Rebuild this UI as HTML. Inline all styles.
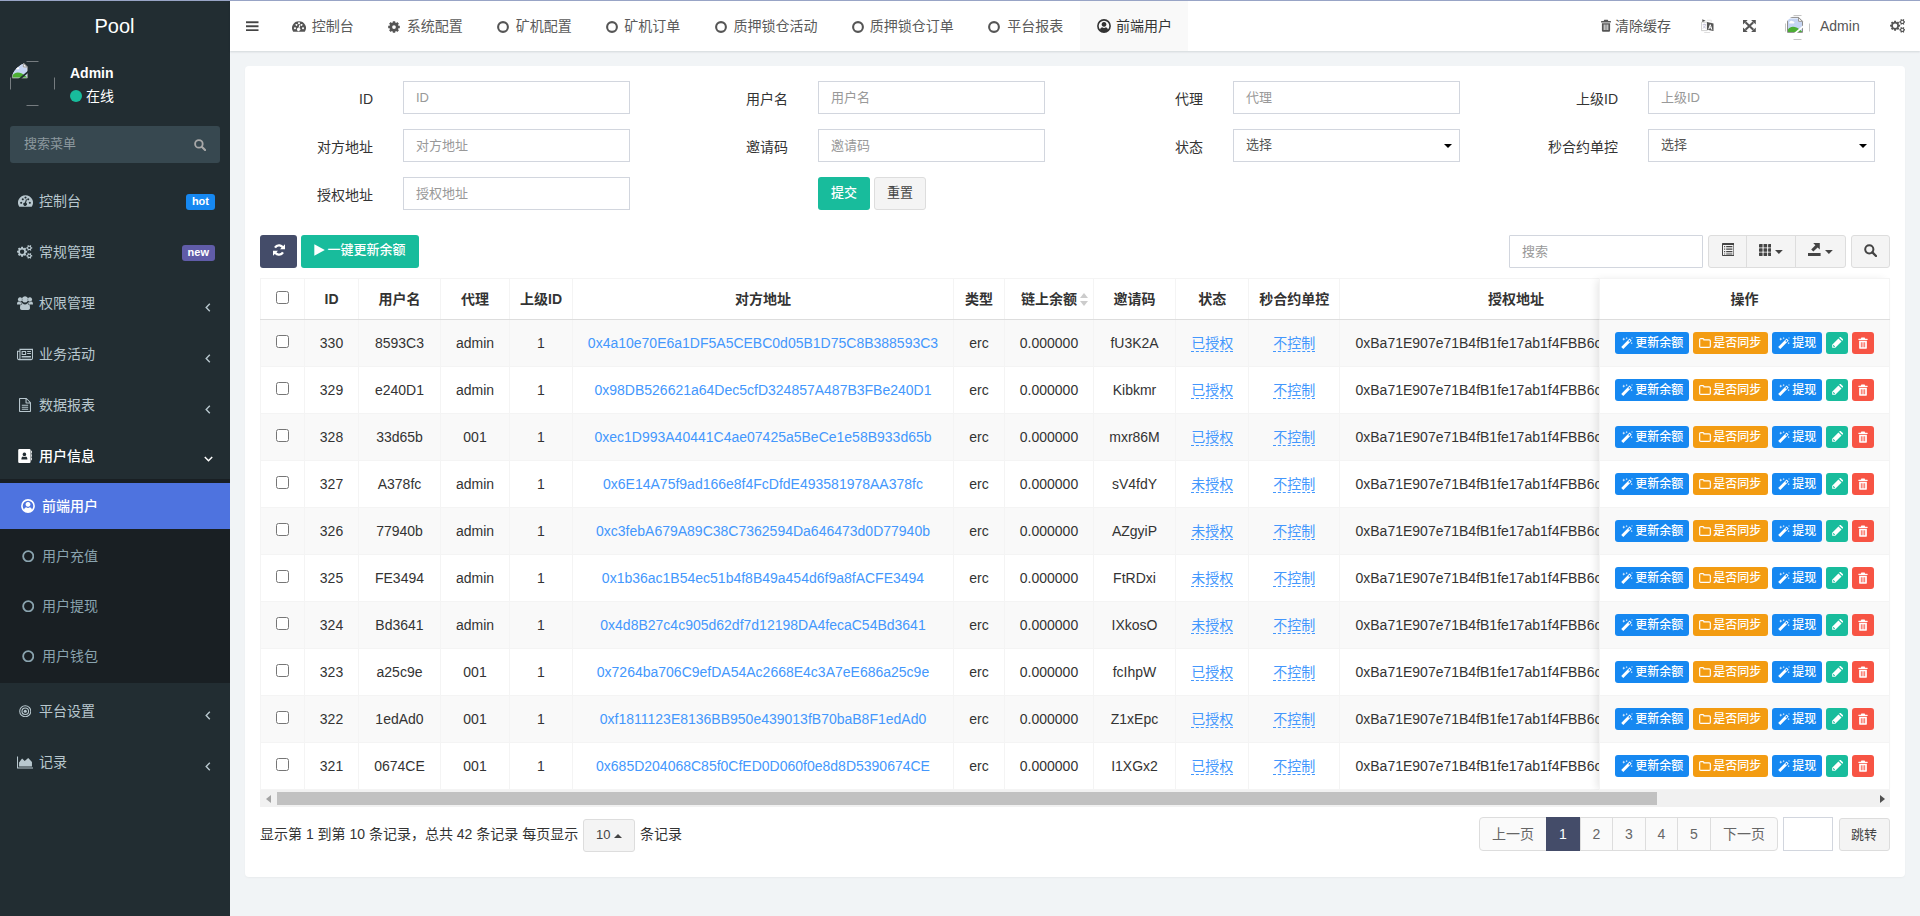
<!DOCTYPE html>
<html lang="zh-CN">
<head>
<meta charset="utf-8">
<title>Pool</title>
<style>
*{box-sizing:border-box}
html,body{margin:0;padding:0}
body{width:1920px;height:916px;overflow:hidden;position:relative;font-family:"Liberation Sans","Noto Sans CJK SC",sans-serif;font-size:14px;line-height:20px;color:#333;background:#f1f4f6}
a{text-decoration:none;color:inherit}
ul{list-style:none;margin:0;padding:0}
i{font-style:normal}
.ic{display:inline-block;vertical-align:middle}
#topline{position:absolute;left:0;top:0;width:1920px;height:1px;background:#98a4c6;z-index:50}
/* sidebar */
#side{position:absolute;left:0;top:0;width:230px;height:916px;background:#222d32;color:#b8c7ce}
#logo{height:50px;line-height:52px;text-align:center;padding-right:1px;color:#fff;font-size:20px}
#upanel{position:absolute;left:0;top:50px;width:230px;height:65px}
#upanel .av{position:absolute;left:10px;top:11px;line-height:0}
#upanel .nm{position:absolute;left:70px;top:13px;color:#fff;font-weight:bold;font-size:14px;line-height:20px}
#upanel .st{position:absolute;left:70px;top:36px;color:#fff;font-size:14px;line-height:20px}
#upanel .dot{display:inline-block;width:12px;height:12px;border-radius:50%;background:#18bc9c;vertical-align:-1px;margin-right:4px}
#sform{position:absolute;left:10px;top:126px;width:210px;height:37px;background:#374850;border-radius:3px;color:#8d999f;font-size:13px;line-height:36px;padding-left:14px}
#sform svg{position:absolute;right:14px;top:12.5px;color:#a8a8a8}
#menu{position:absolute;left:0;top:178px;width:230px}
#menu>li{margin-bottom:5px;position:relative}
#menu>li>a{display:block;height:46px;line-height:46px;color:#b8c7ce;font-size:14px;position:relative}
#menu .mi{position:absolute;left:17px;top:0;height:46px;display:flex;align-items:center;width:16px;justify-content:center}
#menu .tx{position:absolute;left:39px;top:0}
#menu>li.act>a{color:#fff;font-weight:500}
#menu .arr{position:absolute;left:205px;top:0;height:46px;display:flex;align-items:center;padding-top:8px}
#menu .arr.dn{left:204px;padding-top:6px}
.badge{position:absolute;right:15px;top:16px;height:16px;line-height:14.5px;border-radius:3px;color:#fff;font-weight:bold;font-size:11px;padding:0 6px}
.sub{background:#191f23;padding:4px 0;display:flow-root}
.sub li:last-child{margin-bottom:0}
.sub li{height:46px;margin-bottom:4px;position:relative;color:#8aa4af;line-height:46px}
#menu .sub .mi{left:21px;width:14px}
#menu .sub .tx{left:42px}
.sub li.on{background:#4e73df;color:#fff;font-weight:500}
/* header */
#hdr{position:absolute;left:230px;top:0;width:1690px;height:51px;background:#fff;box-shadow:0 1px 2px rgba(0,21,41,.13);z-index:10;color:#555}
#hdr .bars{position:absolute;left:16.3px;top:20.7px;color:#444;line-height:0}
#hdr .bars svg{display:block}
#tabs{position:absolute;left:0;top:0;height:50px}
#tabs .tab{position:absolute;top:0;height:51px;line-height:50px;color:#5b5b5b;white-space:nowrap}
#tabs .tab .ti{position:absolute;left:17px;top:0;height:53px;display:flex;align-items:center;color:#555}
#tabs .tab .tt{position:absolute;top:1px}
#tabs .tab.on{background:#f9f9f9;color:#333}
#tabs .tab.on .ti{color:#333}
#hdr .r{position:absolute;top:0;height:50px;line-height:50px;color:#555;white-space:nowrap}
/* content */
#panel{position:absolute;left:245px;top:66px;width:1660px;height:811px;background:#fff;border-radius:4px;box-shadow:0 1px 2px rgba(0,0,0,.04)}
.lbl{margin-top:1px;position:absolute;width:128px;text-align:right;padding-right:15px;font-size:14px;line-height:20px;color:#333}
.inp{border-radius:0;position:absolute;width:227px;height:33px;border:1px solid #d2d6de;background:#fff;font-size:13px;line-height:31px;padding-left:12px;color:#999}
.inp.sel{color:#555;line-height:29px}
.inp.sel:after{content:"";position:absolute;right:7px;top:14px;border:4px solid transparent;border-top:4.5px solid #000;border-bottom:0}
.btn{position:absolute;height:33px;line-height:30px;border:1px solid transparent;border-radius:3px;font-size:13px;text-align:center;white-space:nowrap}
.btn-def{background:#f4f4f4;border-color:#ddd;color:#444}
.cen{display:flex;align-items:center;justify-content:center;height:100%;padding-bottom:3px}
.crt{margin-left:4px;display:inline-flex}
/* table */
#tw{position:absolute;left:15px;top:212px;width:1630px;height:513px;overflow:hidden}
table{border-collapse:collapse;table-layout:fixed;border-spacing:0}
#tb{width:1722.5px}
th,td{border:1px solid #f4f4f4;text-align:center;padding:0 8px;white-space:nowrap;overflow:hidden;font-size:14px}
th{height:41px;padding-bottom:1px;border-bottom:1px solid #ddd;font-weight:bold;color:#333;background:#fff}
td{height:47px}
tbody tr:nth-child(odd) td{background:#f9f9f9}
tbody tr:nth-child(even) td{background:#fff}
input[type=checkbox]{margin:0;width:13px;height:13px;vertical-align:middle;position:relative;top:-2.5px}
th input[type=checkbox]{top:-2.5px}
td.au{text-align:left;padding-left:15.5px}
.lk{color:#4397fd}
.ed{color:#4397fd;border-bottom:1px dashed #4397fd}
th{position:relative}
.sort{position:absolute;right:5.5px;top:14px;width:8px;height:13px}
.sort i{position:absolute;left:0;border:4px solid transparent}
.sort .u{top:0;border-bottom:5px solid #ccc;border-top:0}
.sort .d{top:8px;border-top:5px solid #ccc;border-bottom:0}
#fx{position:absolute;left:1354px;top:212px;width:291px;height:513px;overflow:hidden;box-shadow:-4px 0 8px -2px rgba(0,0,0,.1);background:#fff}
#fx table{width:291px}
#fx td{padding:0;position:relative}
.xs{position:absolute;top:11.5px;font-weight:500;display:flex;align-items:center;height:22px;padding:0 0 0 5.5px;border-radius:3px;color:#fff;font-size:12px;line-height:20px}
.xs span{margin-left:2.7px}
.xs.sq{width:22px;justify-content:center;padding:0}
#sb{position:absolute;left:15px;top:724px;width:1630px;height:17px;background:#f1f1f1}
#sb .th{position:absolute;left:17px;top:2px;width:1380px;height:13px;background:#c1c1c1}
#sb .l{position:absolute;left:5.5px;top:4.5px;border:4px solid transparent;border-right:5px solid #a3a3a3;border-left:0}
#sb .rr{position:absolute;right:5.5px;top:4.5px;border:4px solid transparent;border-left:5px solid #505050;border-right:0}
#info{position:absolute;left:15px;top:751px;height:34px;line-height:34px;font-size:14px;color:#333;white-space:nowrap}
.pg-btn{display:inline-block;height:33px;line-height:30px;border:1px solid #ddd;background:#f4f4f4;border-radius:3px;padding:0 12px;font-size:13px;color:#444;vertical-align:middle;margin:1px 1px 0 1px}
#pager{position:absolute;left:0;top:751px;height:34px}
#pager a{position:absolute;top:0;height:34px;line-height:32px;border:1px solid #ddd;background:#fafafa;color:#666;text-align:center;font-size:14px}
#pager a:first-child{border-radius:4px 0 0 4px}
#pager a:last-child{border-radius:0 4px 4px 0}
#pager a.on{background:#444c69;border-color:#444c69;color:#fff;z-index:2}
#jump{position:absolute;left:1538px;top:751px;width:50px;height:34px;border:1px solid #d2d6de;background:#fff}
.tic{position:absolute;line-height:0;color:#444}
.tic svg{display:block}
</style>
</head>
<body>
<div id="topline"></div>
<div id="side">
<div id="logo">Pool</div>
<div id="upanel"><span class="av"><svg class="ic" width="45" height="45" viewBox="0 0 45 45"><defs><clipPath id="avc1"><circle cx="22.5" cy="22.5" r="22.0"/></clipPath></defs><g clip-path="url(#avc1)"><g transform="translate(1.8,1.5)"><path d="M0.500 0.500H11.500L15.500 4.500V15.500H0.500Z" fill="#fff" stroke="#8c8c8c" stroke-width="1"/><path d="M1 1.500H11V5H15V15H1Z" fill="#c6d5f3"/><path d="M1 15V12.500C3.500 9 8.500 8.500 15 14.500V15Z" fill="#4cae33"/><path d="M2.600 5.200a1.800 1.500 0 0 1 3.400-.5h.8a1.100 1.100 0 0 1 0 2H2.400a1 1 0 0 1 .2-1.500Z" fill="#fff"/><path d="M11.500 0.500V4.500H15.500Z" fill="#f4f4f4" stroke="#8c8c8c" stroke-width=".9"/><path d="M6.500 16.500 16.500 8V10.300L9.300 16.500Z" fill="#222d32"/></g></g><path d="M16.5 0.500H28.5 M16.5 44.5H28.5 M0.500 16.5V28.5 M44.5 16.5V28.5" stroke="#fff" stroke-opacity="0.55" stroke-width=".7" fill="none"/></svg></span><span class="nm">Admin</span><span class="st"><i class="dot"></i>在线</span></div>
<div id="sform">搜索菜单<svg class="ic" width="12" height="12" viewBox="0 0 13 13" ><circle cx="5.3" cy="5.3" r="4.1" fill="none" stroke="currentColor" stroke-width="2"/><path d="M8.4 8.4 12 12" stroke="currentColor" stroke-width="2.3" stroke-linecap="round"/></svg></div>
<ul id="menu">
<li><a><span class="mi"><svg class="ic" width="15" height="12" viewBox="0 0.8 16 13" preserveAspectRatio="none"><path d="M8 1A8 8 0 0 0 1.2 13.2Q1.4 13.6 1.9 13.6H14.1Q14.6 13.6 14.8 13.2A8 8 0 0 0 8 1Z M3.4 8.2a1.1 1.1 0 1 0 .01 0Z M5.1 4.3a1.1 1.1 0 1 0 .01 0Z M12.6 8.2a1.1 1.1 0 1 0 .01 0Z M8 2.3a1.1 1.1 0 1 0 .01 0Z M10.9 4.3a1.1 1.1 0 1 0 .01 0Z M9.6 5.6 8.6 9.1A1.9 1.9 0 1 1 7.4 8.8L8.5 5.3Z" fill="currentColor" fill-rule="evenodd" /></svg></span><span class="tx">控制台</span><span class="badge" style="background:#1688f1">hot</span></a></li>
<li><a><span class="mi"><svg class="ic" width="15.3" height="13.8" viewBox="0 0 15.3 13.8" ><path d="M8.90 5.63L10.12 5.78L10.12 7.62L8.90 7.77L8.55 8.63L9.30 9.60L8.00 10.90L7.03 10.15L6.17 10.50L6.02 11.72L4.18 11.72L4.03 10.50L3.17 10.15L2.20 10.90L0.90 9.60L1.65 8.63L1.30 7.77L0.08 7.62L0.08 5.78L1.30 5.63L1.65 4.77L0.90 3.80L2.20 2.50L3.17 3.25L4.03 2.90L4.18 1.68L6.02 1.68L6.17 2.90L7.03 3.25L8.00 2.50L9.30 3.80L8.55 4.77ZM2.90 6.70a2.20 2.20 0 1 0 4.40 0a2.20 2.20 0 1 0 -4.40 0ZM14.32 2.22L15.23 2.30L15.23 3.60L14.32 3.68L13.94 4.34L14.33 5.16L13.20 5.81L12.68 5.07L11.92 5.07L11.40 5.81L10.27 5.16L10.66 4.34L10.28 3.68L9.37 3.60L9.37 2.30L10.28 2.22L10.66 1.56L10.27 0.74L11.40 0.09L11.92 0.83L12.68 0.83L13.20 0.09L14.33 0.74L13.94 1.56ZM11.15 2.95a1.15 1.15 0 1 0 2.30 0a1.15 1.15 0 1 0 -2.30 0ZM14.32 10.12L15.23 10.20L15.23 11.50L14.32 11.58L13.94 12.24L14.33 13.06L13.20 13.71L12.68 12.97L11.92 12.97L11.40 13.71L10.27 13.06L10.66 12.24L10.28 11.58L9.37 11.50L9.37 10.20L10.28 10.12L10.66 9.46L10.27 8.64L11.40 7.99L11.92 8.73L12.68 8.73L13.20 7.99L14.33 8.64L13.94 9.46ZM11.15 10.85a1.15 1.15 0 1 0 2.30 0a1.15 1.15 0 1 0 -2.30 0Z" fill="currentColor" fill-rule="evenodd" /></svg></span><span class="tx">常规管理</span><span class="badge" style="background:#605ca8">new</span></a></li>
<li><a><span class="mi"><svg class="ic" width="16" height="14" viewBox="0 0 16 14" ><path d="M8 0.300a3.100 3.100 0 1 0 .01 0Z M3.100 1.300a2.200 2.200 0 1 0 .01 0Z M12.900 1.300a2.200 2.200 0 1 0 .01 0Z M0 8.400C0 6.400 .7 5.600 1.600 5.600c.5.500 1 .700 1.500.700.600 0 1.100-.100 1.500-.400-.100 1 .2 1.800.6 2.500H1.100Q0 8.400 0 8.400Z M16 8.400c0-2-.7-2.800-1.600-2.800-.5.500-1 .700-1.500.700-.600 0-1.100-.100-1.500-.400.100 1-.2 1.800-.6 2.500h4.100q1.100 0 1.100 0Z M3 12C3 8.600 4.200 7.200 5.500 7.200 6.300 8 7.100 8.400 8 8.400S9.700 8 10.500 7.200C11.800 7.200 13 8.600 13 12 13 13.300 12.200 14 11.200 14H4.800C3.800 14 3 13.300 3 12Z" fill="currentColor" fill-rule="evenodd" /></svg></span><span class="tx">权限管理</span><span class="arr"><svg class="ic" width="6" height="9" viewBox="0 0 6 9" ><path d="M4.800 0.800 1.200 4.500 4.800 8.200" fill="none" stroke="currentColor" stroke-width="1.400"/></svg></span></a></li>
<li><a><span class="mi"><svg class="ic" width="17" height="13" viewBox="0 0 17 13" ><path d="M2.6 0.5H17V10.6Q17 12.5 15.1 12.5H1.9Q0 12.500 0 10.600V2.400H2.600Z M3.700 1.600V10.600Q3.700 11.100 3.500 11.400H15.100Q15.900 11.400 15.900 10.600V1.600Z M1.100 3.500V10.600Q1.100 11.400 1.900 11.400 2.600 11.400 2.600 10.600V3.500Z M4.900 2.800H9.700V7H4.900Z M6 3.900V5.900H8.600V3.900Z M10.800 2.800H14.800V3.900H10.800Z M10.800 4.900H14.800V6H10.800Z M4.900 8.100H14.800V9.100H4.900Z M4.900 9.600H14.800V10.600H4.900Z" fill="currentColor" fill-rule="evenodd" /></svg></span><span class="tx">业务活动</span><span class="arr"><svg class="ic" width="6" height="9" viewBox="0 0 6 9" ><path d="M4.800 0.800 1.200 4.500 4.800 8.200" fill="none" stroke="currentColor" stroke-width="1.400"/></svg></span></a></li>
<li><a><span class="mi"><svg class="ic" width="12" height="14" viewBox="0 0 12 14" ><path d="M0.8 0H7.500L12 4.500V13.200Q12 14 11.200 14H0.800Q0 14 0 13.200V0.800Q0 0 0.800 0Z M1.100 1.100V12.900H10.900V5.500H7.300Q6.500 5.500 6.500 4.700V1.100Z M7.600 1.300V4.400H10.700Z M2.800 6.800H9.200V7.800H2.800Z M2.800 8.800H9.200V9.800H2.800Z M2.800 10.800H9.200V11.800H2.800Z" fill="currentColor" fill-rule="evenodd" /></svg></span><span class="tx">数据报表</span><span class="arr"><svg class="ic" width="6" height="9" viewBox="0 0 6 9" ><path d="M4.800 0.800 1.200 4.500 4.800 8.200" fill="none" stroke="currentColor" stroke-width="1.400"/></svg></span></a></li>
<li class="act"><a><span class="mi"><svg class="ic" width="14" height="14" viewBox="0 0 14 14" ><path d="M1.400 0H11.400Q12.600 0 12.600 1.200V12.800Q12.600 14 11.400 14H1.400Q0.200 14 0.200 12.800V1.200Q0.200 0 1.400 0Z M6.400 3.600A1.800 1.800 0 1 0 6.410 3.600Z M3.400 10.400H9.400C9.400 8.200 8.600 7.400 7.800 7.400 7.400 7.800 6.900 8 6.400 8S5.400 7.800 5 7.400C4.200 7.400 3.400 8.200 3.400 10.400Z M13 1.800H13.800V4.400H13Z M13 5.200H13.800V7.800H13Z M13 8.600H13.800V11.200H13Z" fill="currentColor" fill-rule="evenodd" /></svg></span><span class="tx">用户信息</span><span class="arr dn"><svg class="ic" width="9" height="6" viewBox="0 0 9 6" ><path d="M0.800 1 4.500 4.700 8.200 1" fill="none" stroke="currentColor" stroke-width="1.500"/></svg></span></a>
<ul class="sub">
<li class="on"><span class="mi"><svg class="ic" width="14" height="14" viewBox="0 0 14 14" ><circle cx="7" cy="7" r="6.1" fill="none" stroke="currentColor" stroke-width="1.6"/><path d="M7 3a2.4 2.4 0 1 0 .01 0Z M2.9 11.2C3.2 9 4.4 8.2 5.2 8.2 5.7 8.7 6.3 9 7 9S8.3 8.7 8.8 8.2C9.6 8.2 10.8 9 11.1 11.2 10 12.5 8.6 13 7 13S4 12.5 2.9 11.2Z" fill="currentColor" fill-rule="evenodd" /></svg></span><span class="tx">前端用户</span></li>
<li><span class="mi"><svg class="ic" width="12.5" height="12.5" viewBox="0 0 13 13" ><circle cx="6.5" cy="6.5" r="5.3" fill="none" stroke="currentColor" stroke-width="1.9"/></svg></span><span class="tx">用户充值</span></li>
<li><span class="mi"><svg class="ic" width="12.5" height="12.5" viewBox="0 0 13 13" ><circle cx="6.5" cy="6.5" r="5.3" fill="none" stroke="currentColor" stroke-width="1.9"/></svg></span><span class="tx">用户提现</span></li>
<li><span class="mi"><svg class="ic" width="12.5" height="12.5" viewBox="0 0 13 13" ><circle cx="6.5" cy="6.5" r="5.3" fill="none" stroke="currentColor" stroke-width="1.9"/></svg></span><span class="tx">用户钱包</span></li>
</ul></li>
<li><a><span class="mi"><svg class="ic" width="12.5" height="12.5" viewBox="0 0 14 14" ><circle cx="7" cy="7" r="6.2" fill="none" stroke="currentColor" stroke-width="1.2"/><circle cx="7" cy="7" r="3.7" fill="none" stroke="currentColor" stroke-width="1.2"/><circle cx="7" cy="7" r="1.7" fill="currentColor"/></svg></span><span class="tx">平台设置</span><span class="arr"><svg class="ic" width="6" height="9" viewBox="0 0 6 9" ><path d="M4.800 0.800 1.200 4.500 4.800 8.200" fill="none" stroke="currentColor" stroke-width="1.400"/></svg></span></a></li>
<li><a><span class="mi"><svg class="ic" width="17" height="13" viewBox="0 0 17 13" ><path d="M0 0H1.100V11.900H17V13H0Z M2.200 10.800V6.500L5.400 2.200 8.200 5 11.900 1.600 15.900 6V10.800Z" fill="currentColor" fill-rule="evenodd" /></svg></span><span class="tx">记录</span><span class="arr"><svg class="ic" width="6" height="9" viewBox="0 0 6 9" ><path d="M4.800 0.800 1.200 4.500 4.800 8.200" fill="none" stroke="currentColor" stroke-width="1.400"/></svg></span></a></li>
</ul>
</div>
<div id="hdr">
<span class="bars"><svg class="ic" width="12.5" height="10.5" viewBox="0 0 12.5 10.5" ><rect x="0" y="0.300" width="12.500" height="1.900" fill="currentColor"/><rect x="0" y="4.300" width="12.500" height="1.900" fill="currentColor"/><rect x="0" y="8.300" width="12.500" height="1.900" fill="currentColor"/></svg></span>
<div id="tabs">
<a class="tab" style="left:45px;width:95px"><span class="ti"><svg class="ic" width="14" height="11" viewBox="0 0.8 16 13" preserveAspectRatio="none"><path d="M8 1A8 8 0 0 0 1.2 13.2Q1.4 13.6 1.9 13.6H14.1Q14.6 13.6 14.8 13.2A8 8 0 0 0 8 1Z M3.4 8.2a1.1 1.1 0 1 0 .01 0Z M5.1 4.3a1.1 1.1 0 1 0 .01 0Z M12.6 8.2a1.1 1.1 0 1 0 .01 0Z M8 2.3a1.1 1.1 0 1 0 .01 0Z M10.9 4.3a1.1 1.1 0 1 0 .01 0Z M9.6 5.6 8.6 9.1A1.9 1.9 0 1 1 7.4 8.8L8.5 5.3Z" fill="currentColor" fill-rule="evenodd" /></svg></span><span class="tt" style="left:36.7px">控制台</span></a>
<a class="tab" style="left:140px;width:110px"><span class="ti"><svg class="ic" style="position:relative;left:0.8px" width="12" height="12" viewBox="0 0 16 16" ><path d="M13.84 6.25L15.75 6.46L15.75 9.54L13.84 9.75L13.37 10.90L14.57 12.39L12.39 14.57L10.90 13.37L9.75 13.84L9.54 15.75L6.46 15.75L6.25 13.84L5.10 13.37L3.61 14.57L1.43 12.39L2.63 10.90L2.16 9.75L0.25 9.54L0.25 6.46L2.16 6.25L2.63 5.10L1.43 3.61L3.61 1.43L5.10 2.63L6.25 2.16L6.46 0.25L9.54 0.25L9.75 2.16L10.90 2.63L12.39 1.43L14.57 3.61L13.37 5.10ZM5.50 8.00a2.50 2.50 0 1 0 5.00 0a2.50 2.50 0 1 0 -5.00 0Z" fill="currentColor" fill-rule="evenodd" /></svg></span><span class="tt" style="left:36.7px">系统配置</span></a>
<a class="tab" style="left:250px;width:109px"><span class="ti"><svg class="ic" width="12" height="12" viewBox="0 0 13 13" ><circle cx="6.5" cy="6.5" r="5.3" fill="none" stroke="currentColor" stroke-width="2.25"/></svg></span><span class="tt" style="left:35.7px">矿机配置</span></a>
<a class="tab" style="left:359px;width:109px"><span class="ti"><svg class="ic" width="12" height="12" viewBox="0 0 13 13" ><circle cx="6.5" cy="6.5" r="5.3" fill="none" stroke="currentColor" stroke-width="2.25"/></svg></span><span class="tt" style="left:35.2px">矿机订单</span></a>
<a class="tab" style="left:468px;width:137px"><span class="ti"><svg class="ic" width="12" height="12" viewBox="0 0 13 13" ><circle cx="6.5" cy="6.5" r="5.3" fill="none" stroke="currentColor" stroke-width="2.25"/></svg></span><span class="tt" style="left:35.4px">质押锁仓活动</span></a>
<a class="tab" style="left:605px;width:136px"><span class="ti"><svg class="ic" width="12" height="12" viewBox="0 0 13 13" ><circle cx="6.5" cy="6.5" r="5.3" fill="none" stroke="currentColor" stroke-width="2.25"/></svg></span><span class="tt" style="left:34.7px">质押锁仓订单</span></a>
<a class="tab" style="left:741px;width:109px"><span class="ti"><svg class="ic" width="12" height="12" viewBox="0 0 13 13" ><circle cx="6.5" cy="6.5" r="5.3" fill="none" stroke="currentColor" stroke-width="2.25"/></svg></span><span class="tt" style="left:36.2px">平台报表</span></a>
<a class="tab on" style="left:850px;width:108px"><span class="ti"><svg class="ic" style="position:relative;top:-1px;left:-0.5px" width="14" height="14" viewBox="0 0 14 14" ><circle cx="7" cy="7" r="6.1" fill="none" stroke="currentColor" stroke-width="1.6"/><path d="M7 3a2.4 2.4 0 1 0 .01 0Z M2.9 11.2C3.2 9 4.4 8.2 5.2 8.2 5.7 8.7 6.3 9 7 9S8.3 8.7 8.8 8.2C9.6 8.2 10.8 9 11.1 11.2 10 12.5 8.6 13 7 13S4 12.5 2.9 11.2Z" fill="currentColor" fill-rule="evenodd" /></svg></span><span class="tt" style="left:36.0px">前端用户</span></a>
</div>
<span class="r" style="left:1371px"><svg class="ic" style="position:relative;top:-1px" width="10" height="13" viewBox="0 0 11 14" ><path d="M3.6 0.6h3.8l.7 1.4h2.4q.4 0 .4.4v.9q0 .3-.4.3H.5q-.4 0-.4-.3v-.9q0-.4.4-.4h2.4Z M1 4.4h9v8q0 1.4-1.3 1.4H2.3Q1 13.8 1 12.4Z M3 6v6h1V6Z M5 6v6h1V6Z M7 6v6h1V6Z" fill="currentColor" fill-rule="evenodd" /></svg><span style="margin-left:4px;vertical-align:middle">清除缓存</span></span>
<span class="r" style="left:1471px;top:19px;height:14px;line-height:0"><svg class="ic" width="13" height="14" viewBox="0 0 13 14" ><path d="M0.500 3.200H6.200V11.600H0.500Z" fill="#fff" stroke="#c4c4c4" stroke-width=".8"/><path d="M1.300 0.300 4.600 1.700 1.300 3.100Z" fill="#555"/><path d="M6.100 1.200H10.300V3.600" fill="none" stroke="#ddd" stroke-width=".7"/><path d="M1.700 5.600H5M3.300 4.600V5.600M4.600 5.600C4.300 7.400 3 8.800 1.700 9.400M2.300 6.600C2.800 7.900 3.800 8.900 5 9.300" fill="none" stroke="#b9b4d0" stroke-width=".7"/><path d="M6 3.100 12.500 4.400V12.100L6 10.800Z" fill="#555"/><path d="M7.700 10.300 9.300 5.700 10.900 10.700M8.300 8.800H10.300" fill="none" stroke="#fff" stroke-width="1"/><path d="M3.200 13.600H9.200" stroke="#ccc" stroke-width=".7"/></svg></span>
<span class="r" style="left:1513px;top:20px;height:12px;line-height:0"><svg class="ic" width="12.8" height="12" viewBox="0 0 13 13" preserveAspectRatio="none"><path d="M2.500 2.500 10.500 10.500M10.500 2.500 2.500 10.500" stroke="currentColor" stroke-width="2.100" fill="none"/><path d="M0 0H4.800L0 4.800Z M13 0V4.800L8.200 0Z M13 13H8.200L13 8.200Z M0 13V8.200L4.800 13Z" fill="currentColor" fill-rule="evenodd" /></svg></span>
<span class="r" style="left:1554.8px;top:15px;line-height:0;height:26px"><svg class="ic" width="25" height="25" viewBox="0 0 25 25"><defs><clipPath id="avc2"><circle cx="12.5" cy="12.5" r="12.0"/></clipPath></defs><g clip-path="url(#avc2)"><g transform="translate(2,1.9)"><path d="M0.500 0.500H11.500L15.500 4.500V15.500H0.500Z" fill="#fff" stroke="#8c8c8c" stroke-width="1"/><path d="M1 1.500H11V5H15V15H1Z" fill="#c6d5f3"/><path d="M1 15V12.500C3.500 9 8.500 8.500 15 14.500V15Z" fill="#4cae33"/><path d="M2.600 5.200a1.800 1.500 0 0 1 3.400-.5h.8a1.100 1.100 0 0 1 0 2H2.400a1 1 0 0 1 .2-1.500Z" fill="#fff"/><path d="M11.500 0.500V4.500H15.500Z" fill="#f4f4f4" stroke="#8c8c8c" stroke-width=".9"/><path d="M6.500 16.500 16.500 8V10.300L9.300 16.500Z" fill="#fff"/></g></g><path d="M8.5 0.500H16.5 M8.5 24.5H16.5 M0.500 8.5V16.5 M24.5 8.5V16.5" stroke="#888" stroke-opacity="0.7" stroke-width=".7" fill="none"/></svg></span>
<span class="r" style="left:1590px;top:1px">Admin</span>
<span class="r" style="left:1659.9px;top:19.2px;height:14px;line-height:0"><svg class="ic" width="15.3" height="13.8" viewBox="0 0 15.3 13.8" ><path d="M8.90 5.63L10.12 5.78L10.12 7.62L8.90 7.77L8.55 8.63L9.30 9.60L8.00 10.90L7.03 10.15L6.17 10.50L6.02 11.72L4.18 11.72L4.03 10.50L3.17 10.15L2.20 10.90L0.90 9.60L1.65 8.63L1.30 7.77L0.08 7.62L0.08 5.78L1.30 5.63L1.65 4.77L0.90 3.80L2.20 2.50L3.17 3.25L4.03 2.90L4.18 1.68L6.02 1.68L6.17 2.90L7.03 3.25L8.00 2.50L9.30 3.80L8.55 4.77ZM2.90 6.70a2.20 2.20 0 1 0 4.40 0a2.20 2.20 0 1 0 -4.40 0ZM14.32 2.22L15.23 2.30L15.23 3.60L14.32 3.68L13.94 4.34L14.33 5.16L13.20 5.81L12.68 5.07L11.92 5.07L11.40 5.81L10.27 5.16L10.66 4.34L10.28 3.68L9.37 3.60L9.37 2.30L10.28 2.22L10.66 1.56L10.27 0.74L11.40 0.09L11.92 0.83L12.68 0.83L13.20 0.09L14.33 0.74L13.94 1.56ZM11.15 2.95a1.15 1.15 0 1 0 2.30 0a1.15 1.15 0 1 0 -2.30 0ZM14.32 10.12L15.23 10.20L15.23 11.50L14.32 11.58L13.94 12.24L14.33 13.06L13.20 13.71L12.68 12.97L11.92 12.97L11.40 13.71L10.27 13.06L10.66 12.24L10.28 11.58L9.37 11.50L9.37 10.20L10.28 10.12L10.66 9.46L10.27 8.64L11.40 7.99L11.92 8.73L12.68 8.73L13.20 7.99L14.33 8.64L13.94 9.46ZM11.15 10.85a1.15 1.15 0 1 0 2.30 0a1.15 1.15 0 1 0 -2.30 0Z" fill="currentColor" fill-rule="evenodd" /></svg></span>
</div>
<div id="panel">
<label class="lbl" style="left:15px;top:22px">ID</label><div class="inp" style="left:158px;top:15px">ID</div>
<label class="lbl" style="left:430px;top:22px">用户名</label><div class="inp" style="left:573px;top:15px">用户名</div>
<label class="lbl" style="left:845px;top:22px">代理</label><div class="inp" style="left:988px;top:15px">代理</div>
<label class="lbl" style="left:1260px;top:22px">上级ID</label><div class="inp" style="left:1403px;top:15px">上级ID</div>
<label class="lbl" style="left:15px;top:70px">对方地址</label><div class="inp" style="left:158px;top:63px">对方地址</div>
<label class="lbl" style="left:430px;top:70px">邀请码</label><div class="inp" style="left:573px;top:63px">邀请码</div>
<label class="lbl" style="left:845px;top:70px">状态</label><div class="inp sel" style="left:988px;top:63px">选择</div>
<label class="lbl" style="left:1260px;top:70px">秒合约单控</label><div class="inp sel" style="left:1403px;top:63px">选择</div>
<label class="lbl" style="left:15px;top:118px">授权地址</label><div class="inp" style="left:158px;top:111px">授权地址</div>
<a class="btn" style="left:573px;top:111px;width:52px;background:#18bc9c;color:#fff;font-weight:500">提交</a><a class="btn btn-def" style="left:629px;top:111px;width:52px">重置</a>
<a class="btn" style="left:15px;top:169px;width:37px;background:#444c69;color:#fff"><span class="cen"><svg class="ic" width="12" height="12" viewBox="0 0 12 12" ><path d="M10.300 4.600A4.600 4.600 0 0 0 2 3.600M1.700 7.400A4.600 4.600 0 0 0 10 8.400" fill="none" stroke="currentColor" stroke-width="2.300"/><path d="M12 0.200V5.200H7Z M0 11.800V6.800H5Z" fill="currentColor" fill-rule="evenodd" /></svg></span></a>
<a class="btn" style="left:56px;top:169px;width:118px;background:#18bc9c;color:#fff;"><span class="cen" style="justify-content:flex-start;padding-left:11.500px"><svg class="ic" width="11" height="12" viewBox="0 0 11 12" ><path d="M0.300 0.300 10.800 6 0.300 11.700Z" fill="currentColor" fill-rule="evenodd" /></svg><span style="margin-left:3px;font-weight:500">一键更新余额</span></span></a>
<div class="inp" style="left:1264px;top:169px;width:194px;border-radius:1px">搜索</div>
<a class="btn btn-def" style="left:1463px;top:169px;width:39px;border-radius:3px 0 0 3px"></a><a class="btn btn-def" style="left:1501px;top:169px;width:50px;border-radius:0"></a><a class="btn btn-def" style="left:1550px;top:169px;width:51px;border-radius:0 3px 3px 0"></a><a class="btn btn-def" style="left:1606px;top:169px;width:39px"></a>
<span class="tic" style="left:1476.7px;top:177px"><svg class="ic" width="12.4" height="13" viewBox="0 0 12.4 13" ><path d="M0 0.800Q0 0 .8 0H11.600Q12.400 0 12.400 .8V12.200Q12.400 13 11.600 13H.8Q0 13 0 12.200Z M1 2.100V12.100H11.400V2.100Z M2.100 3.1H3.200V4.2H2.100Z M4.200 3.1H10.400V4.2H4.200Z M2.100 5.6H3.200V6.699999999999999H2.100Z M4.200 5.6H10.400V6.699999999999999H4.200Z M2.100 8.1H3.200V9.2H2.100Z M4.200 8.1H10.400V9.2H4.200Z M2.100 10.4H3.200V11.5H2.100Z M4.200 10.4H10.400V11.5H4.200Z" fill="currentColor" fill-rule="evenodd" /></svg></span><span class="tic" style="left:1513.5px;top:178px"><svg class="ic" width="12.7" height="12" viewBox="0 0 12.7 12" ><rect x="0" y="0" width="3.600" height="3.400" rx=".4" fill="currentColor"/><rect x="0" y="4.3" width="3.600" height="3.400" rx=".4" fill="currentColor"/><rect x="0" y="8.6" width="3.600" height="3.400" rx=".4" fill="currentColor"/><rect x="4.55" y="0" width="3.600" height="3.400" rx=".4" fill="currentColor"/><rect x="4.55" y="4.3" width="3.600" height="3.400" rx=".4" fill="currentColor"/><rect x="4.55" y="8.6" width="3.600" height="3.400" rx=".4" fill="currentColor"/><rect x="9.1" y="0" width="3.600" height="3.400" rx=".4" fill="currentColor"/><rect x="9.1" y="4.3" width="3.600" height="3.400" rx=".4" fill="currentColor"/><rect x="9.1" y="8.6" width="3.600" height="3.400" rx=".4" fill="currentColor"/></svg></span><span class="tic" style="left:1530.2px;top:183.9px"><svg class="ic" width="7.8" height="4" viewBox="0 0 8 4" ><path d="M0 0H8L4 4Z" fill="currentColor" fill-rule="evenodd" /></svg></span><span class="tic" style="left:1563.4px;top:177px"><svg class="ic" width="12.6" height="13" viewBox="0 0 12.6 13" ><path d="M0 10H12.600V13H0Z M5.200 0H11.800V6.600L9.600 4.400 5.400 8.600 3.200 6.400 7.400 2.200Z" fill="currentColor" fill-rule="evenodd" /></svg></span><span class="tic" style="left:1580.2px;top:183.9px"><svg class="ic" width="7.8" height="4" viewBox="0 0 8 4" ><path d="M0 0H8L4 4Z" fill="currentColor" fill-rule="evenodd" /></svg></span><span class="tic" style="left:1619.2px;top:178.2px"><svg class="ic" width="13" height="13" viewBox="0 0 13 13" ><circle cx="5.3" cy="5.3" r="4.1" fill="none" stroke="currentColor" stroke-width="2"/><path d="M8.4 8.4 12 12" stroke="currentColor" stroke-width="2.3" stroke-linecap="round"/></svg></span>
<div id="tw"><table id="tb"><colgroup><col style="width:44px"><col style="width:54px"><col style="width:82px"><col style="width:69px"><col style="width:63px"><col style="width:381px"><col style="width:51px"><col style="width:89px"><col style="width:82px"><col style="width:73.4px"><col style="width:90.6px"><col style="width:353px"><col style="width:290px"></colgroup>
<thead><tr><th><input type="checkbox"></th><th>ID</th><th>用户名</th><th>代理</th><th>上级ID</th><th>对方地址</th><th>类型</th><th>链上余额<span class="sort"><i class="u"></i><i class="d"></i></span></th><th>邀请码</th><th>状态</th><th>秒合约单控</th><th>授权地址</th><th>操作</th></tr></thead>
<tbody>
<tr><td><input type="checkbox"></td><td>330</td><td>8593C3</td><td>admin</td><td>1</td><td><a class="lk">0x4a10e70E6a1DF5A5CEBC0d05B1D75C8B388593C3</a></td><td>erc</td><td>0.000000</td><td>fU3K2A</td><td><a class="ed">已授权</a></td><td><a class="ed">不控制</a></td><td class="au">0xBa71E907e71B4fB1fe17ab1f4FBB6c8D52A90e3F</td><td></td></tr>
<tr><td><input type="checkbox"></td><td>329</td><td>e240D1</td><td>admin</td><td>1</td><td><a class="lk">0x98DB526621a64Dec5cfD324857A487B3FBe240D1</a></td><td>erc</td><td>0.000000</td><td>Kibkmr</td><td><a class="ed">已授权</a></td><td><a class="ed">不控制</a></td><td class="au">0xBa71E907e71B4fB1fe17ab1f4FBB6c8D52A90e3F</td><td></td></tr>
<tr><td><input type="checkbox"></td><td>328</td><td>33d65b</td><td>001</td><td>1</td><td><a class="lk">0xec1D993A40441C4ae07425a5BeCe1e58B933d65b</a></td><td>erc</td><td>0.000000</td><td>mxr86M</td><td><a class="ed">已授权</a></td><td><a class="ed">不控制</a></td><td class="au">0xBa71E907e71B4fB1fe17ab1f4FBB6c8D52A90e3F</td><td></td></tr>
<tr><td><input type="checkbox"></td><td>327</td><td>A378fc</td><td>admin</td><td>1</td><td><a class="lk">0x6E14A75f9ad166e8f4FcDfdE493581978AA378fc</a></td><td>erc</td><td>0.000000</td><td>sV4fdY</td><td><a class="ed">未授权</a></td><td><a class="ed">不控制</a></td><td class="au">0xBa71E907e71B4fB1fe17ab1f4FBB6c8D52A90e3F</td><td></td></tr>
<tr><td><input type="checkbox"></td><td>326</td><td>77940b</td><td>admin</td><td>1</td><td><a class="lk">0xc3febA679A89C38C7362594Da646473d0D77940b</a></td><td>erc</td><td>0.000000</td><td>AZgyiP</td><td><a class="ed">未授权</a></td><td><a class="ed">不控制</a></td><td class="au">0xBa71E907e71B4fB1fe17ab1f4FBB6c8D52A90e3F</td><td></td></tr>
<tr><td><input type="checkbox"></td><td>325</td><td>FE3494</td><td>admin</td><td>1</td><td><a class="lk">0x1b36ac1B54ec51b4f8B49a454d6f9a8fACFE3494</a></td><td>erc</td><td>0.000000</td><td>FtRDxi</td><td><a class="ed">未授权</a></td><td><a class="ed">不控制</a></td><td class="au">0xBa71E907e71B4fB1fe17ab1f4FBB6c8D52A90e3F</td><td></td></tr>
<tr><td><input type="checkbox"></td><td>324</td><td>Bd3641</td><td>admin</td><td>1</td><td><a class="lk">0x4d8B27c4c905d62df7d12198DA4fecaC54Bd3641</a></td><td>erc</td><td>0.000000</td><td>IXkosO</td><td><a class="ed">未授权</a></td><td><a class="ed">不控制</a></td><td class="au">0xBa71E907e71B4fB1fe17ab1f4FBB6c8D52A90e3F</td><td></td></tr>
<tr><td><input type="checkbox"></td><td>323</td><td>a25c9e</td><td>001</td><td>1</td><td><a class="lk">0x7264ba706C9efDA54Ac2668E4c3A7eE686a25c9e</a></td><td>erc</td><td>0.000000</td><td>fcIhpW</td><td><a class="ed">已授权</a></td><td><a class="ed">不控制</a></td><td class="au">0xBa71E907e71B4fB1fe17ab1f4FBB6c8D52A90e3F</td><td></td></tr>
<tr><td><input type="checkbox"></td><td>322</td><td>1edAd0</td><td>001</td><td>1</td><td><a class="lk">0xf1811123E8136BB950e439013fB70baB8F1edAd0</a></td><td>erc</td><td>0.000000</td><td>Z1xEpc</td><td><a class="ed">已授权</a></td><td><a class="ed">不控制</a></td><td class="au">0xBa71E907e71B4fB1fe17ab1f4FBB6c8D52A90e3F</td><td></td></tr>
<tr><td><input type="checkbox"></td><td>321</td><td>0674CE</td><td>001</td><td>1</td><td><a class="lk">0x685D204068C85f0CfED0D060f0e8d8D5390674CE</a></td><td>erc</td><td>0.000000</td><td>I1XGx2</td><td><a class="ed">已授权</a></td><td><a class="ed">不控制</a></td><td class="au">0xBa71E907e71B4fB1fe17ab1f4FBB6c8D52A90e3F</td><td></td></tr>
</tbody></table></div>
<div id="fx"><table><thead><tr><th>操作</th></tr></thead><tbody>
<tr><td><a class="xs" style="left:15px;width:74px;background:#1688f1"><svg class="ic" width="12" height="12" viewBox="0 0 12 12" ><path d="M8.6 1.5 10.7 3.600 2.300 12 0.200 9.900Z M7.300 4 8.200 4.900 9.400 3.700 8.500 2.800Z M2.800 0.400 3.250 1.650 4.500 2.100 3.250 2.550 2.800 3.800 2.350 2.550 1.100 2.100 2.350 1.650Z M5.700 0 6 0.800 6.800 1.100 6 1.400 5.700 2.200 5.400 1.400 4.600 1.100 5.400 0.800Z M10.700 5 11 5.800 11.800 6.100 11 6.400 10.700 7.200 10.400 6.400 9.600 6.100 10.400 5.800Z M11 0 11.250 0.650 11.900 0.900 11.250 1.150 11 1.800 10.750 1.150 10.100 0.900 10.750 0.650Z" fill="currentColor" fill-rule="evenodd" /></svg><span>更新余额</span></a><a class="xs" style="left:93px;width:75px;background:#f39c12"><svg class="ic" width="12" height="10" viewBox="0 0 13 11" ><path d="M0.650 1.900Q0.650 0.650 1.900 0.650H4.200Q5.300 0.650 5.300 1.700V2.100H11.100Q12.350 2.100 12.350 3.300V9.100Q12.350 10.350 11.100 10.350H1.900Q0.650 10.350 0.650 9.100Z" fill="none" stroke="currentColor" stroke-width="1.300"/></svg><span>是否同步</span></a><a class="xs" style="left:172px;width:50px;background:#1688f1"><svg class="ic" width="12" height="12" viewBox="0 0 12 12" ><path d="M8.6 1.5 10.7 3.600 2.300 12 0.200 9.900Z M7.300 4 8.200 4.900 9.400 3.700 8.500 2.800Z M2.800 0.400 3.250 1.650 4.500 2.100 3.250 2.550 2.800 3.800 2.350 2.550 1.100 2.100 2.350 1.650Z M5.700 0 6 0.800 6.800 1.100 6 1.400 5.700 2.200 5.400 1.400 4.600 1.100 5.400 0.800Z M10.700 5 11 5.800 11.800 6.100 11 6.400 10.700 7.200 10.400 6.400 9.600 6.100 10.400 5.800Z M11 0 11.250 0.650 11.900 0.900 11.250 1.150 11 1.800 10.750 1.150 10.100 0.900 10.750 0.650Z" fill="currentColor" fill-rule="evenodd" /></svg><span>提现</span></a><a class="xs sq" style="left:226px;background:#18bc9c"><svg class="ic" width="11" height="11" viewBox="0 0 12 12" ><path d="M0.200 11.800V8.400L7 1.600 10.400 5 3.600 11.800Z M7.800 0.800 8.500 0.100Q9.100-0.400 9.700 0.200L11.800 2.300Q12.400 2.900 11.900 3.500L11.200 4.200Z M1.100 9.300V10.200H1.800V10.900H2.700L3.300 10.300 1.700 8.700Z" fill="currentColor" fill-rule="evenodd" /></svg></a><a class="xs sq" style="left:252px;background:#f75444"><svg class="ic" width="10" height="12" viewBox="0 0 11 14" ><path d="M3.6 0.6h3.8l.7 1.4h2.4q.4 0 .4.4v.9q0 .3-.4.3H.5q-.4 0-.4-.3v-.9q0-.4.4-.4h2.4Z M1 4.4h9v8q0 1.4-1.3 1.4H2.3Q1 13.8 1 12.4Z M3 6v6h1V6Z M5 6v6h1V6Z M7 6v6h1V6Z" fill="currentColor" fill-rule="evenodd" /></svg></a></td></tr>
<tr><td><a class="xs" style="left:15px;width:74px;background:#1688f1"><svg class="ic" width="12" height="12" viewBox="0 0 12 12" ><path d="M8.6 1.5 10.7 3.600 2.300 12 0.200 9.900Z M7.300 4 8.200 4.900 9.400 3.700 8.500 2.800Z M2.800 0.400 3.250 1.650 4.500 2.100 3.250 2.550 2.800 3.800 2.350 2.550 1.100 2.100 2.350 1.650Z M5.700 0 6 0.800 6.800 1.100 6 1.400 5.700 2.200 5.400 1.400 4.600 1.100 5.400 0.800Z M10.700 5 11 5.800 11.800 6.100 11 6.400 10.700 7.200 10.400 6.400 9.600 6.100 10.400 5.800Z M11 0 11.250 0.650 11.900 0.900 11.250 1.150 11 1.800 10.750 1.150 10.100 0.900 10.750 0.650Z" fill="currentColor" fill-rule="evenodd" /></svg><span>更新余额</span></a><a class="xs" style="left:93px;width:75px;background:#f39c12"><svg class="ic" width="12" height="10" viewBox="0 0 13 11" ><path d="M0.650 1.900Q0.650 0.650 1.900 0.650H4.200Q5.300 0.650 5.300 1.700V2.100H11.100Q12.350 2.100 12.350 3.300V9.100Q12.350 10.350 11.100 10.350H1.900Q0.650 10.350 0.650 9.100Z" fill="none" stroke="currentColor" stroke-width="1.300"/></svg><span>是否同步</span></a><a class="xs" style="left:172px;width:50px;background:#1688f1"><svg class="ic" width="12" height="12" viewBox="0 0 12 12" ><path d="M8.6 1.5 10.7 3.600 2.300 12 0.200 9.900Z M7.300 4 8.200 4.900 9.400 3.700 8.500 2.800Z M2.800 0.400 3.250 1.650 4.500 2.100 3.250 2.550 2.800 3.800 2.350 2.550 1.100 2.100 2.350 1.650Z M5.700 0 6 0.800 6.800 1.100 6 1.400 5.700 2.200 5.400 1.400 4.600 1.100 5.400 0.800Z M10.700 5 11 5.800 11.800 6.100 11 6.400 10.700 7.200 10.400 6.400 9.600 6.100 10.400 5.800Z M11 0 11.250 0.650 11.900 0.900 11.250 1.150 11 1.800 10.750 1.150 10.100 0.900 10.750 0.650Z" fill="currentColor" fill-rule="evenodd" /></svg><span>提现</span></a><a class="xs sq" style="left:226px;background:#18bc9c"><svg class="ic" width="11" height="11" viewBox="0 0 12 12" ><path d="M0.200 11.800V8.400L7 1.600 10.400 5 3.600 11.800Z M7.800 0.800 8.500 0.100Q9.100-0.400 9.700 0.200L11.800 2.300Q12.400 2.900 11.900 3.500L11.200 4.200Z M1.100 9.300V10.200H1.800V10.900H2.700L3.300 10.300 1.700 8.700Z" fill="currentColor" fill-rule="evenodd" /></svg></a><a class="xs sq" style="left:252px;background:#f75444"><svg class="ic" width="10" height="12" viewBox="0 0 11 14" ><path d="M3.6 0.6h3.8l.7 1.4h2.4q.4 0 .4.4v.9q0 .3-.4.3H.5q-.4 0-.4-.3v-.9q0-.4.4-.4h2.4Z M1 4.4h9v8q0 1.4-1.3 1.4H2.3Q1 13.8 1 12.4Z M3 6v6h1V6Z M5 6v6h1V6Z M7 6v6h1V6Z" fill="currentColor" fill-rule="evenodd" /></svg></a></td></tr>
<tr><td><a class="xs" style="left:15px;width:74px;background:#1688f1"><svg class="ic" width="12" height="12" viewBox="0 0 12 12" ><path d="M8.6 1.5 10.7 3.600 2.300 12 0.200 9.900Z M7.300 4 8.200 4.900 9.400 3.700 8.500 2.800Z M2.800 0.400 3.250 1.650 4.500 2.100 3.250 2.550 2.800 3.800 2.350 2.550 1.100 2.100 2.350 1.650Z M5.700 0 6 0.800 6.800 1.100 6 1.400 5.700 2.200 5.400 1.400 4.600 1.100 5.400 0.800Z M10.700 5 11 5.800 11.800 6.100 11 6.400 10.700 7.200 10.400 6.400 9.600 6.100 10.400 5.800Z M11 0 11.250 0.650 11.900 0.900 11.250 1.150 11 1.800 10.750 1.150 10.100 0.900 10.750 0.650Z" fill="currentColor" fill-rule="evenodd" /></svg><span>更新余额</span></a><a class="xs" style="left:93px;width:75px;background:#f39c12"><svg class="ic" width="12" height="10" viewBox="0 0 13 11" ><path d="M0.650 1.900Q0.650 0.650 1.900 0.650H4.200Q5.300 0.650 5.300 1.700V2.100H11.100Q12.350 2.100 12.350 3.300V9.100Q12.350 10.350 11.100 10.350H1.900Q0.650 10.350 0.650 9.100Z" fill="none" stroke="currentColor" stroke-width="1.300"/></svg><span>是否同步</span></a><a class="xs" style="left:172px;width:50px;background:#1688f1"><svg class="ic" width="12" height="12" viewBox="0 0 12 12" ><path d="M8.6 1.5 10.7 3.600 2.300 12 0.200 9.900Z M7.300 4 8.200 4.900 9.400 3.700 8.500 2.800Z M2.800 0.400 3.250 1.650 4.500 2.100 3.250 2.550 2.800 3.800 2.350 2.550 1.100 2.100 2.350 1.650Z M5.700 0 6 0.800 6.800 1.100 6 1.400 5.700 2.200 5.400 1.400 4.600 1.100 5.400 0.800Z M10.700 5 11 5.800 11.800 6.100 11 6.400 10.700 7.200 10.400 6.400 9.600 6.100 10.400 5.800Z M11 0 11.250 0.650 11.900 0.900 11.250 1.150 11 1.800 10.750 1.150 10.100 0.900 10.750 0.650Z" fill="currentColor" fill-rule="evenodd" /></svg><span>提现</span></a><a class="xs sq" style="left:226px;background:#18bc9c"><svg class="ic" width="11" height="11" viewBox="0 0 12 12" ><path d="M0.200 11.800V8.400L7 1.600 10.400 5 3.600 11.800Z M7.800 0.800 8.500 0.100Q9.100-0.400 9.700 0.200L11.800 2.300Q12.400 2.900 11.900 3.500L11.200 4.200Z M1.100 9.300V10.200H1.800V10.900H2.700L3.300 10.300 1.700 8.700Z" fill="currentColor" fill-rule="evenodd" /></svg></a><a class="xs sq" style="left:252px;background:#f75444"><svg class="ic" width="10" height="12" viewBox="0 0 11 14" ><path d="M3.6 0.6h3.8l.7 1.4h2.4q.4 0 .4.4v.9q0 .3-.4.3H.5q-.4 0-.4-.3v-.9q0-.4.4-.4h2.4Z M1 4.4h9v8q0 1.4-1.3 1.4H2.3Q1 13.8 1 12.4Z M3 6v6h1V6Z M5 6v6h1V6Z M7 6v6h1V6Z" fill="currentColor" fill-rule="evenodd" /></svg></a></td></tr>
<tr><td><a class="xs" style="left:15px;width:74px;background:#1688f1"><svg class="ic" width="12" height="12" viewBox="0 0 12 12" ><path d="M8.6 1.5 10.7 3.600 2.300 12 0.200 9.900Z M7.300 4 8.200 4.900 9.400 3.700 8.500 2.800Z M2.800 0.400 3.250 1.650 4.500 2.100 3.250 2.550 2.800 3.800 2.350 2.550 1.100 2.100 2.350 1.650Z M5.700 0 6 0.800 6.800 1.100 6 1.400 5.700 2.200 5.400 1.400 4.600 1.100 5.400 0.800Z M10.700 5 11 5.800 11.800 6.100 11 6.400 10.700 7.200 10.400 6.400 9.600 6.100 10.400 5.800Z M11 0 11.250 0.650 11.900 0.900 11.250 1.150 11 1.800 10.750 1.150 10.100 0.900 10.750 0.650Z" fill="currentColor" fill-rule="evenodd" /></svg><span>更新余额</span></a><a class="xs" style="left:93px;width:75px;background:#f39c12"><svg class="ic" width="12" height="10" viewBox="0 0 13 11" ><path d="M0.650 1.900Q0.650 0.650 1.900 0.650H4.200Q5.300 0.650 5.300 1.700V2.100H11.100Q12.350 2.100 12.350 3.300V9.100Q12.350 10.350 11.100 10.350H1.900Q0.650 10.350 0.650 9.100Z" fill="none" stroke="currentColor" stroke-width="1.300"/></svg><span>是否同步</span></a><a class="xs" style="left:172px;width:50px;background:#1688f1"><svg class="ic" width="12" height="12" viewBox="0 0 12 12" ><path d="M8.6 1.5 10.7 3.600 2.300 12 0.200 9.900Z M7.300 4 8.200 4.900 9.400 3.700 8.500 2.800Z M2.800 0.400 3.250 1.650 4.500 2.100 3.250 2.550 2.800 3.800 2.350 2.550 1.100 2.100 2.350 1.650Z M5.700 0 6 0.800 6.800 1.100 6 1.400 5.700 2.200 5.400 1.400 4.600 1.100 5.400 0.800Z M10.700 5 11 5.800 11.800 6.100 11 6.400 10.700 7.200 10.400 6.400 9.600 6.100 10.400 5.800Z M11 0 11.250 0.650 11.900 0.900 11.250 1.150 11 1.800 10.750 1.150 10.100 0.900 10.750 0.650Z" fill="currentColor" fill-rule="evenodd" /></svg><span>提现</span></a><a class="xs sq" style="left:226px;background:#18bc9c"><svg class="ic" width="11" height="11" viewBox="0 0 12 12" ><path d="M0.200 11.800V8.400L7 1.600 10.400 5 3.600 11.800Z M7.800 0.800 8.500 0.100Q9.100-0.400 9.700 0.200L11.800 2.300Q12.400 2.900 11.900 3.500L11.200 4.200Z M1.100 9.300V10.200H1.800V10.900H2.700L3.300 10.300 1.700 8.700Z" fill="currentColor" fill-rule="evenodd" /></svg></a><a class="xs sq" style="left:252px;background:#f75444"><svg class="ic" width="10" height="12" viewBox="0 0 11 14" ><path d="M3.6 0.6h3.8l.7 1.4h2.4q.4 0 .4.4v.9q0 .3-.4.3H.5q-.4 0-.4-.3v-.9q0-.4.4-.4h2.4Z M1 4.4h9v8q0 1.4-1.3 1.4H2.3Q1 13.8 1 12.4Z M3 6v6h1V6Z M5 6v6h1V6Z M7 6v6h1V6Z" fill="currentColor" fill-rule="evenodd" /></svg></a></td></tr>
<tr><td><a class="xs" style="left:15px;width:74px;background:#1688f1"><svg class="ic" width="12" height="12" viewBox="0 0 12 12" ><path d="M8.6 1.5 10.7 3.600 2.300 12 0.200 9.900Z M7.300 4 8.200 4.900 9.400 3.700 8.500 2.800Z M2.800 0.400 3.250 1.650 4.500 2.100 3.250 2.550 2.800 3.800 2.350 2.550 1.100 2.100 2.350 1.650Z M5.700 0 6 0.800 6.800 1.100 6 1.400 5.700 2.200 5.400 1.400 4.600 1.100 5.400 0.800Z M10.700 5 11 5.800 11.800 6.100 11 6.400 10.700 7.200 10.400 6.400 9.600 6.100 10.400 5.800Z M11 0 11.250 0.650 11.900 0.900 11.250 1.150 11 1.800 10.750 1.150 10.100 0.900 10.750 0.650Z" fill="currentColor" fill-rule="evenodd" /></svg><span>更新余额</span></a><a class="xs" style="left:93px;width:75px;background:#f39c12"><svg class="ic" width="12" height="10" viewBox="0 0 13 11" ><path d="M0.650 1.900Q0.650 0.650 1.900 0.650H4.200Q5.300 0.650 5.300 1.700V2.100H11.100Q12.350 2.100 12.350 3.300V9.100Q12.350 10.350 11.100 10.350H1.900Q0.650 10.350 0.650 9.100Z" fill="none" stroke="currentColor" stroke-width="1.300"/></svg><span>是否同步</span></a><a class="xs" style="left:172px;width:50px;background:#1688f1"><svg class="ic" width="12" height="12" viewBox="0 0 12 12" ><path d="M8.6 1.5 10.7 3.600 2.300 12 0.200 9.900Z M7.300 4 8.200 4.900 9.400 3.700 8.500 2.800Z M2.800 0.400 3.250 1.650 4.500 2.100 3.250 2.550 2.800 3.800 2.350 2.550 1.100 2.100 2.350 1.650Z M5.700 0 6 0.800 6.800 1.100 6 1.400 5.700 2.200 5.400 1.400 4.600 1.100 5.400 0.800Z M10.700 5 11 5.800 11.800 6.100 11 6.400 10.700 7.200 10.400 6.400 9.600 6.100 10.400 5.800Z M11 0 11.250 0.650 11.900 0.900 11.250 1.150 11 1.800 10.750 1.150 10.100 0.900 10.750 0.650Z" fill="currentColor" fill-rule="evenodd" /></svg><span>提现</span></a><a class="xs sq" style="left:226px;background:#18bc9c"><svg class="ic" width="11" height="11" viewBox="0 0 12 12" ><path d="M0.200 11.800V8.400L7 1.600 10.400 5 3.600 11.800Z M7.800 0.800 8.500 0.100Q9.100-0.400 9.700 0.200L11.800 2.300Q12.400 2.900 11.900 3.500L11.200 4.200Z M1.100 9.300V10.200H1.800V10.900H2.700L3.300 10.300 1.700 8.700Z" fill="currentColor" fill-rule="evenodd" /></svg></a><a class="xs sq" style="left:252px;background:#f75444"><svg class="ic" width="10" height="12" viewBox="0 0 11 14" ><path d="M3.6 0.6h3.8l.7 1.4h2.4q.4 0 .4.4v.9q0 .3-.4.3H.5q-.4 0-.4-.3v-.9q0-.4.4-.4h2.4Z M1 4.4h9v8q0 1.4-1.3 1.4H2.3Q1 13.8 1 12.4Z M3 6v6h1V6Z M5 6v6h1V6Z M7 6v6h1V6Z" fill="currentColor" fill-rule="evenodd" /></svg></a></td></tr>
<tr><td><a class="xs" style="left:15px;width:74px;background:#1688f1"><svg class="ic" width="12" height="12" viewBox="0 0 12 12" ><path d="M8.6 1.5 10.7 3.600 2.300 12 0.200 9.900Z M7.300 4 8.200 4.900 9.400 3.700 8.500 2.800Z M2.800 0.400 3.250 1.650 4.500 2.100 3.250 2.550 2.800 3.800 2.350 2.550 1.100 2.100 2.350 1.650Z M5.700 0 6 0.800 6.800 1.100 6 1.400 5.700 2.200 5.400 1.400 4.600 1.100 5.400 0.800Z M10.700 5 11 5.800 11.800 6.100 11 6.400 10.700 7.200 10.400 6.400 9.600 6.100 10.400 5.800Z M11 0 11.250 0.650 11.900 0.900 11.250 1.150 11 1.800 10.750 1.150 10.100 0.900 10.750 0.650Z" fill="currentColor" fill-rule="evenodd" /></svg><span>更新余额</span></a><a class="xs" style="left:93px;width:75px;background:#f39c12"><svg class="ic" width="12" height="10" viewBox="0 0 13 11" ><path d="M0.650 1.900Q0.650 0.650 1.900 0.650H4.200Q5.300 0.650 5.300 1.700V2.100H11.100Q12.350 2.100 12.350 3.300V9.100Q12.350 10.350 11.100 10.350H1.900Q0.650 10.350 0.650 9.100Z" fill="none" stroke="currentColor" stroke-width="1.300"/></svg><span>是否同步</span></a><a class="xs" style="left:172px;width:50px;background:#1688f1"><svg class="ic" width="12" height="12" viewBox="0 0 12 12" ><path d="M8.6 1.5 10.7 3.600 2.300 12 0.200 9.900Z M7.300 4 8.200 4.900 9.400 3.700 8.500 2.800Z M2.800 0.400 3.250 1.650 4.500 2.100 3.250 2.550 2.800 3.800 2.350 2.550 1.100 2.100 2.350 1.650Z M5.700 0 6 0.800 6.800 1.100 6 1.400 5.700 2.200 5.400 1.400 4.600 1.100 5.400 0.800Z M10.700 5 11 5.800 11.800 6.100 11 6.400 10.700 7.200 10.400 6.400 9.600 6.100 10.400 5.800Z M11 0 11.250 0.650 11.900 0.900 11.250 1.150 11 1.800 10.750 1.150 10.100 0.900 10.750 0.650Z" fill="currentColor" fill-rule="evenodd" /></svg><span>提现</span></a><a class="xs sq" style="left:226px;background:#18bc9c"><svg class="ic" width="11" height="11" viewBox="0 0 12 12" ><path d="M0.200 11.800V8.400L7 1.600 10.400 5 3.600 11.800Z M7.800 0.800 8.500 0.100Q9.100-0.400 9.700 0.200L11.800 2.300Q12.400 2.900 11.900 3.500L11.200 4.200Z M1.100 9.300V10.200H1.800V10.900H2.700L3.300 10.300 1.700 8.700Z" fill="currentColor" fill-rule="evenodd" /></svg></a><a class="xs sq" style="left:252px;background:#f75444"><svg class="ic" width="10" height="12" viewBox="0 0 11 14" ><path d="M3.6 0.6h3.8l.7 1.4h2.4q.4 0 .4.4v.9q0 .3-.4.3H.5q-.4 0-.4-.3v-.9q0-.4.4-.4h2.4Z M1 4.4h9v8q0 1.4-1.3 1.4H2.3Q1 13.8 1 12.4Z M3 6v6h1V6Z M5 6v6h1V6Z M7 6v6h1V6Z" fill="currentColor" fill-rule="evenodd" /></svg></a></td></tr>
<tr><td><a class="xs" style="left:15px;width:74px;background:#1688f1"><svg class="ic" width="12" height="12" viewBox="0 0 12 12" ><path d="M8.6 1.5 10.7 3.600 2.300 12 0.200 9.900Z M7.300 4 8.200 4.900 9.400 3.700 8.500 2.800Z M2.800 0.400 3.250 1.650 4.500 2.100 3.250 2.550 2.800 3.800 2.350 2.550 1.100 2.100 2.350 1.650Z M5.700 0 6 0.800 6.800 1.100 6 1.400 5.700 2.200 5.400 1.400 4.600 1.100 5.400 0.800Z M10.700 5 11 5.800 11.800 6.100 11 6.400 10.700 7.200 10.400 6.400 9.600 6.100 10.400 5.800Z M11 0 11.250 0.650 11.900 0.900 11.250 1.150 11 1.800 10.750 1.150 10.100 0.900 10.750 0.650Z" fill="currentColor" fill-rule="evenodd" /></svg><span>更新余额</span></a><a class="xs" style="left:93px;width:75px;background:#f39c12"><svg class="ic" width="12" height="10" viewBox="0 0 13 11" ><path d="M0.650 1.900Q0.650 0.650 1.900 0.650H4.200Q5.300 0.650 5.300 1.700V2.100H11.100Q12.350 2.100 12.350 3.300V9.100Q12.350 10.350 11.100 10.350H1.900Q0.650 10.350 0.650 9.100Z" fill="none" stroke="currentColor" stroke-width="1.300"/></svg><span>是否同步</span></a><a class="xs" style="left:172px;width:50px;background:#1688f1"><svg class="ic" width="12" height="12" viewBox="0 0 12 12" ><path d="M8.6 1.5 10.7 3.600 2.300 12 0.200 9.900Z M7.300 4 8.200 4.900 9.400 3.700 8.500 2.800Z M2.800 0.400 3.250 1.650 4.500 2.100 3.250 2.550 2.800 3.800 2.350 2.550 1.100 2.100 2.350 1.650Z M5.700 0 6 0.800 6.800 1.100 6 1.400 5.700 2.200 5.400 1.400 4.600 1.100 5.400 0.800Z M10.700 5 11 5.800 11.800 6.100 11 6.400 10.700 7.200 10.400 6.400 9.600 6.100 10.400 5.800Z M11 0 11.250 0.650 11.900 0.900 11.250 1.150 11 1.800 10.750 1.150 10.100 0.900 10.750 0.650Z" fill="currentColor" fill-rule="evenodd" /></svg><span>提现</span></a><a class="xs sq" style="left:226px;background:#18bc9c"><svg class="ic" width="11" height="11" viewBox="0 0 12 12" ><path d="M0.200 11.800V8.400L7 1.600 10.400 5 3.600 11.800Z M7.800 0.800 8.500 0.100Q9.100-0.400 9.700 0.200L11.800 2.300Q12.400 2.900 11.900 3.500L11.200 4.200Z M1.100 9.300V10.200H1.800V10.900H2.700L3.300 10.300 1.700 8.700Z" fill="currentColor" fill-rule="evenodd" /></svg></a><a class="xs sq" style="left:252px;background:#f75444"><svg class="ic" width="10" height="12" viewBox="0 0 11 14" ><path d="M3.6 0.6h3.8l.7 1.4h2.4q.4 0 .4.4v.9q0 .3-.4.3H.5q-.4 0-.4-.3v-.9q0-.4.4-.4h2.4Z M1 4.4h9v8q0 1.4-1.3 1.4H2.3Q1 13.8 1 12.4Z M3 6v6h1V6Z M5 6v6h1V6Z M7 6v6h1V6Z" fill="currentColor" fill-rule="evenodd" /></svg></a></td></tr>
<tr><td><a class="xs" style="left:15px;width:74px;background:#1688f1"><svg class="ic" width="12" height="12" viewBox="0 0 12 12" ><path d="M8.6 1.5 10.7 3.600 2.300 12 0.200 9.900Z M7.300 4 8.200 4.900 9.400 3.700 8.500 2.800Z M2.800 0.400 3.250 1.650 4.500 2.100 3.250 2.550 2.800 3.800 2.350 2.550 1.100 2.100 2.350 1.650Z M5.700 0 6 0.800 6.800 1.100 6 1.400 5.700 2.200 5.400 1.400 4.600 1.100 5.400 0.800Z M10.700 5 11 5.800 11.800 6.100 11 6.400 10.700 7.200 10.400 6.400 9.600 6.100 10.400 5.800Z M11 0 11.250 0.650 11.900 0.900 11.250 1.150 11 1.800 10.750 1.150 10.100 0.900 10.750 0.650Z" fill="currentColor" fill-rule="evenodd" /></svg><span>更新余额</span></a><a class="xs" style="left:93px;width:75px;background:#f39c12"><svg class="ic" width="12" height="10" viewBox="0 0 13 11" ><path d="M0.650 1.900Q0.650 0.650 1.900 0.650H4.200Q5.300 0.650 5.300 1.700V2.100H11.100Q12.350 2.100 12.350 3.300V9.100Q12.350 10.350 11.100 10.350H1.900Q0.650 10.350 0.650 9.100Z" fill="none" stroke="currentColor" stroke-width="1.300"/></svg><span>是否同步</span></a><a class="xs" style="left:172px;width:50px;background:#1688f1"><svg class="ic" width="12" height="12" viewBox="0 0 12 12" ><path d="M8.6 1.5 10.7 3.600 2.300 12 0.200 9.900Z M7.300 4 8.200 4.900 9.400 3.700 8.500 2.800Z M2.800 0.400 3.250 1.650 4.500 2.100 3.250 2.550 2.800 3.800 2.350 2.550 1.100 2.100 2.350 1.650Z M5.700 0 6 0.800 6.800 1.100 6 1.400 5.700 2.200 5.400 1.400 4.600 1.100 5.400 0.800Z M10.700 5 11 5.800 11.800 6.100 11 6.400 10.700 7.200 10.400 6.400 9.600 6.100 10.400 5.800Z M11 0 11.250 0.650 11.900 0.900 11.250 1.150 11 1.800 10.750 1.150 10.100 0.900 10.750 0.650Z" fill="currentColor" fill-rule="evenodd" /></svg><span>提现</span></a><a class="xs sq" style="left:226px;background:#18bc9c"><svg class="ic" width="11" height="11" viewBox="0 0 12 12" ><path d="M0.200 11.800V8.400L7 1.600 10.400 5 3.600 11.800Z M7.800 0.800 8.500 0.100Q9.100-0.400 9.700 0.200L11.800 2.300Q12.400 2.900 11.900 3.500L11.200 4.200Z M1.100 9.300V10.200H1.800V10.900H2.700L3.300 10.300 1.700 8.700Z" fill="currentColor" fill-rule="evenodd" /></svg></a><a class="xs sq" style="left:252px;background:#f75444"><svg class="ic" width="10" height="12" viewBox="0 0 11 14" ><path d="M3.6 0.6h3.8l.7 1.4h2.4q.4 0 .4.4v.9q0 .3-.4.3H.5q-.4 0-.4-.3v-.9q0-.4.4-.4h2.4Z M1 4.4h9v8q0 1.4-1.3 1.4H2.3Q1 13.8 1 12.4Z M3 6v6h1V6Z M5 6v6h1V6Z M7 6v6h1V6Z" fill="currentColor" fill-rule="evenodd" /></svg></a></td></tr>
<tr><td><a class="xs" style="left:15px;width:74px;background:#1688f1"><svg class="ic" width="12" height="12" viewBox="0 0 12 12" ><path d="M8.6 1.5 10.7 3.600 2.300 12 0.200 9.900Z M7.300 4 8.200 4.900 9.400 3.700 8.500 2.800Z M2.800 0.400 3.250 1.650 4.500 2.100 3.250 2.550 2.800 3.800 2.350 2.550 1.100 2.100 2.350 1.650Z M5.700 0 6 0.800 6.800 1.100 6 1.400 5.700 2.200 5.400 1.400 4.600 1.100 5.400 0.800Z M10.700 5 11 5.800 11.800 6.100 11 6.400 10.700 7.200 10.400 6.400 9.600 6.100 10.400 5.800Z M11 0 11.250 0.650 11.900 0.900 11.250 1.150 11 1.800 10.750 1.150 10.100 0.900 10.750 0.650Z" fill="currentColor" fill-rule="evenodd" /></svg><span>更新余额</span></a><a class="xs" style="left:93px;width:75px;background:#f39c12"><svg class="ic" width="12" height="10" viewBox="0 0 13 11" ><path d="M0.650 1.900Q0.650 0.650 1.900 0.650H4.200Q5.300 0.650 5.300 1.700V2.100H11.100Q12.350 2.100 12.350 3.300V9.100Q12.350 10.350 11.100 10.350H1.900Q0.650 10.350 0.650 9.100Z" fill="none" stroke="currentColor" stroke-width="1.300"/></svg><span>是否同步</span></a><a class="xs" style="left:172px;width:50px;background:#1688f1"><svg class="ic" width="12" height="12" viewBox="0 0 12 12" ><path d="M8.6 1.5 10.7 3.600 2.300 12 0.200 9.900Z M7.300 4 8.200 4.900 9.400 3.700 8.500 2.800Z M2.800 0.400 3.250 1.650 4.500 2.100 3.250 2.550 2.800 3.800 2.350 2.550 1.100 2.100 2.350 1.650Z M5.700 0 6 0.800 6.800 1.100 6 1.400 5.700 2.200 5.400 1.400 4.600 1.100 5.400 0.800Z M10.700 5 11 5.800 11.800 6.100 11 6.400 10.700 7.200 10.400 6.400 9.600 6.100 10.400 5.800Z M11 0 11.250 0.650 11.900 0.900 11.250 1.150 11 1.800 10.750 1.150 10.100 0.900 10.750 0.650Z" fill="currentColor" fill-rule="evenodd" /></svg><span>提现</span></a><a class="xs sq" style="left:226px;background:#18bc9c"><svg class="ic" width="11" height="11" viewBox="0 0 12 12" ><path d="M0.200 11.800V8.400L7 1.600 10.400 5 3.600 11.800Z M7.800 0.800 8.500 0.100Q9.100-0.400 9.700 0.200L11.800 2.300Q12.400 2.900 11.900 3.500L11.200 4.200Z M1.100 9.300V10.200H1.800V10.900H2.700L3.300 10.300 1.700 8.700Z" fill="currentColor" fill-rule="evenodd" /></svg></a><a class="xs sq" style="left:252px;background:#f75444"><svg class="ic" width="10" height="12" viewBox="0 0 11 14" ><path d="M3.6 0.6h3.8l.7 1.4h2.4q.4 0 .4.4v.9q0 .3-.4.3H.5q-.4 0-.4-.3v-.9q0-.4.4-.4h2.4Z M1 4.4h9v8q0 1.4-1.3 1.4H2.3Q1 13.8 1 12.4Z M3 6v6h1V6Z M5 6v6h1V6Z M7 6v6h1V6Z" fill="currentColor" fill-rule="evenodd" /></svg></a></td></tr>
<tr><td><a class="xs" style="left:15px;width:74px;background:#1688f1"><svg class="ic" width="12" height="12" viewBox="0 0 12 12" ><path d="M8.6 1.5 10.7 3.600 2.300 12 0.200 9.900Z M7.300 4 8.200 4.900 9.400 3.700 8.500 2.800Z M2.800 0.400 3.250 1.650 4.500 2.100 3.250 2.550 2.800 3.800 2.350 2.550 1.100 2.100 2.350 1.650Z M5.700 0 6 0.800 6.800 1.100 6 1.400 5.700 2.200 5.400 1.400 4.600 1.100 5.400 0.800Z M10.700 5 11 5.800 11.800 6.100 11 6.400 10.700 7.200 10.400 6.400 9.600 6.100 10.400 5.800Z M11 0 11.250 0.650 11.900 0.900 11.250 1.150 11 1.800 10.750 1.150 10.100 0.900 10.750 0.650Z" fill="currentColor" fill-rule="evenodd" /></svg><span>更新余额</span></a><a class="xs" style="left:93px;width:75px;background:#f39c12"><svg class="ic" width="12" height="10" viewBox="0 0 13 11" ><path d="M0.650 1.900Q0.650 0.650 1.900 0.650H4.200Q5.300 0.650 5.300 1.700V2.100H11.100Q12.350 2.100 12.350 3.300V9.100Q12.350 10.350 11.100 10.350H1.900Q0.650 10.350 0.650 9.100Z" fill="none" stroke="currentColor" stroke-width="1.300"/></svg><span>是否同步</span></a><a class="xs" style="left:172px;width:50px;background:#1688f1"><svg class="ic" width="12" height="12" viewBox="0 0 12 12" ><path d="M8.6 1.5 10.7 3.600 2.300 12 0.200 9.900Z M7.300 4 8.200 4.900 9.400 3.700 8.500 2.800Z M2.800 0.400 3.250 1.650 4.500 2.100 3.250 2.550 2.800 3.800 2.350 2.550 1.100 2.100 2.350 1.650Z M5.700 0 6 0.800 6.800 1.100 6 1.400 5.700 2.200 5.400 1.400 4.600 1.100 5.400 0.800Z M10.700 5 11 5.800 11.800 6.100 11 6.400 10.700 7.200 10.400 6.400 9.600 6.100 10.400 5.800Z M11 0 11.250 0.650 11.900 0.900 11.250 1.150 11 1.800 10.750 1.150 10.100 0.900 10.750 0.650Z" fill="currentColor" fill-rule="evenodd" /></svg><span>提现</span></a><a class="xs sq" style="left:226px;background:#18bc9c"><svg class="ic" width="11" height="11" viewBox="0 0 12 12" ><path d="M0.200 11.800V8.400L7 1.600 10.400 5 3.600 11.800Z M7.800 0.800 8.500 0.100Q9.100-0.400 9.700 0.200L11.800 2.300Q12.400 2.900 11.900 3.500L11.200 4.200Z M1.100 9.300V10.200H1.800V10.900H2.700L3.300 10.300 1.700 8.700Z" fill="currentColor" fill-rule="evenodd" /></svg></a><a class="xs sq" style="left:252px;background:#f75444"><svg class="ic" width="10" height="12" viewBox="0 0 11 14" ><path d="M3.6 0.6h3.8l.7 1.4h2.4q.4 0 .4.4v.9q0 .3-.4.3H.5q-.4 0-.4-.3v-.9q0-.4.4-.4h2.4Z M1 4.4h9v8q0 1.4-1.3 1.4H2.3Q1 13.8 1 12.4Z M3 6v6h1V6Z M5 6v6h1V6Z M7 6v6h1V6Z" fill="currentColor" fill-rule="evenodd" /></svg></a></td></tr>
</tbody></table></div>
<div id="sb"><i class="l"></i><i class="th"></i><i class="rr"></i></div>
<div id="info">显示第 1 到第 10 条记录，总共 42 条记录 每页显示 <span class="pg-btn">10 <svg class="ic" width="8" height="4" viewBox="0 0 8 4" ><path d="M0 4H8L4 0Z" fill="currentColor" fill-rule="evenodd" /></svg></span> 条记录</div>
<div id="pager"><a class="" style="left:1234px;width:68px">上一页</a><a class="on" style="left:1301px;width:34px">1</a><a class="" style="left:1335px;width:33px">2</a><a class="" style="left:1367px;width:34px">3</a><a class="" style="left:1400px;width:33px">4</a><a class="" style="left:1432px;width:34px">5</a><a class="" style="left:1465px;width:68px">下一页</a></div><div id="jump"></div><a class="btn btn-def" style="left:1593.5px;top:752px;width:51px;height:33px;line-height:31px;font-size:13px">跳转</a>
</div>
</body>
</html>
